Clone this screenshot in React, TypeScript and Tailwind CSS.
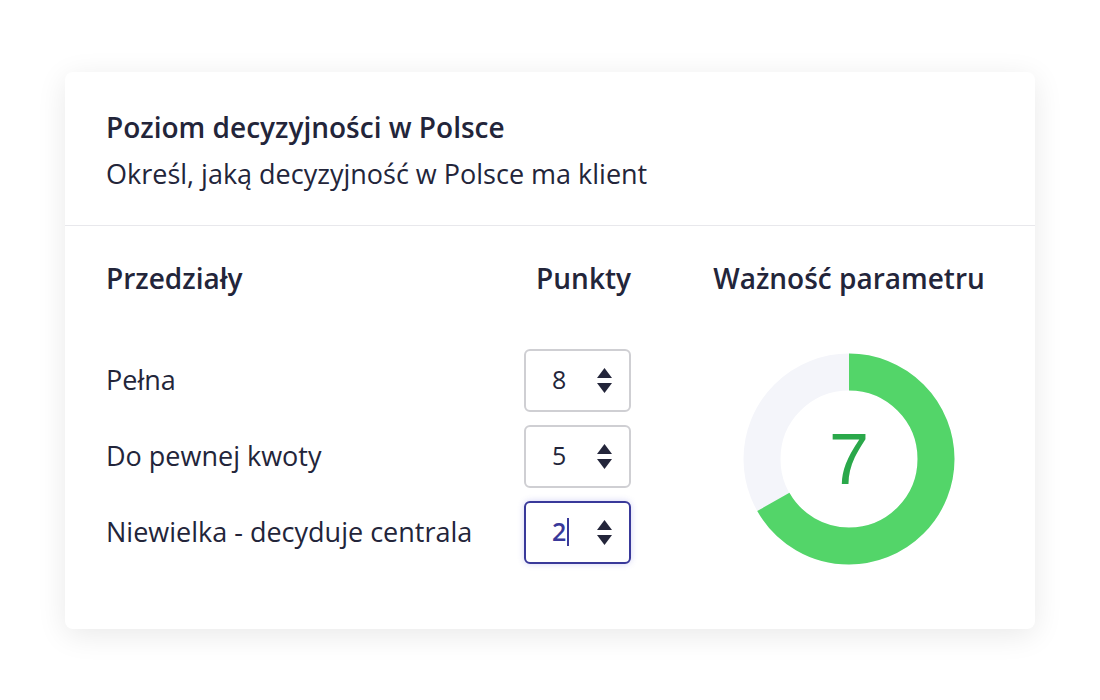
import React, { useState } from 'react';

const rows = [
  { label: 'Pełna', value: 8 },
  { label: 'Do pewnej kwoty', value: 5 },
  { label: 'Niewielka - decyduje centrala', value: 2 },
];

const Spinner = () => (
  <div className="flex flex-col items-center gap-[5px]">
    <svg width="15" height="10" viewBox="0 0 15 10"><path d="M7.5 0L15 10H0z" fill="#23253a" /></svg>
    <svg width="15" height="10" viewBox="0 0 15 10"><path d="M0 0h15L7.5 10z" fill="#23253a" /></svg>
  </div>
);

const Donut = ({ value }: { value: number }) => {
  const r = 87;
  const c = 2 * Math.PI * r;
  const part = value / 10.5;
  return (
    <div className="relative w-[212px] h-[212px]">
      <svg width="212" height="212" viewBox="0 0 212 212" className="-rotate-90">
        <circle cx="106" cy="106" r={r} fill="none" stroke="#f4f5fa" strokeWidth="37" />
        <circle
          cx="106"
          cy="106"
          r={r}
          fill="none"
          stroke="#53d569"
          strokeWidth="37"
          strokeDasharray={`${c * part} ${c}`}
        />
      </svg>
      <div className="absolute inset-0 flex items-center justify-center text-[72px] leading-none text-[#2aa84a] font-['Liberation_Sans',sans-serif]">
        {value}
      </div>
    </div>
  );
};

export default function App() {
  const [values] = useState(rows.map(r => r.value));

  return (
    <div className="min-h-screen bg-white flex items-center justify-center font-['Open_Sans',sans-serif] text-[#23253a]">
      <div className="w-[970px] h-[557px] bg-white rounded-lg shadow-[0_6px_30px_rgba(0,0,0,0.09)]">
        <div className="px-[41px] pt-[37px] pb-[33px] border-b border-[#e8e8ec]">
          <h1 className="text-[28px] font-semibold leading-[36px]">Poziom decyzyjności w Polsce</h1>
          <p className="text-[27px] leading-[36px] mt-[11px]">Określ, jaką decyzyjność w Polsce ma klient</p>
        </div>
        <div className="flex pl-[41px] pt-[32px]">
          <div className="w-[525px]">
            <div className="flex items-center h-[40px]">
              <div className="flex-1 text-[28px] font-semibold">Przedziały</div>
              <div className="text-right text-[28px] font-semibold">Punkty</div>
            </div>
            <div className="mt-[51px] flex flex-col gap-[13px]">
              {rows.map((row, i) => (
                <div key={row.label} className="flex items-center h-[63px]">
                  <div className="flex-1 text-[27px]">{row.label}</div>
                  <div
                    className={`w-[107px] h-[63px] rounded-md border-2 flex items-center pl-[26px] pr-[17px] justify-between bg-white ${
                      i === 2
                        ? 'border-[#39399a] shadow-[0_0_6px_rgba(80,80,220,0.25)] text-[#39399a]'
                        : 'border-[#cfcfd3]'
                    }`}
                  >
                    <span className={`text-[25px] flex items-center ${i === 2 ? 'font-semibold' : ''}`}>
                      {values[i]}
                      {i === 2 && <span className="inline-block w-[1.5px] h-[28px] bg-[#39399a] ml-[1px]" />}
                    </span>
                    <Spinner />
                  </div>
                </div>
              ))}
            </div>
          </div>
          <div className="ml-[81px] w-[274px] flex flex-col items-center">
            <div className="h-[40px] flex items-center text-[28px] font-semibold whitespace-nowrap">Ważność parametru</div>
            <div className="mt-[55px]">
              <Donut value={7} />
            </div>
          </div>
        </div>
      </div>
    </div>
  );
}
